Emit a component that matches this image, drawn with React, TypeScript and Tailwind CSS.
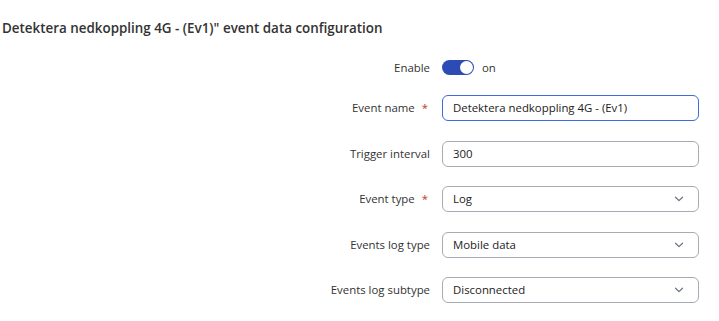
import React from "react";

const Chevron = () => (
  <svg width="10" height="6" viewBox="0 0 10 6" className="absolute right-[14px] top-1/2 -translate-y-1/2">
    <path d="M1.5 1.2 5 4.6 8.5 1.2" fill="none" stroke="#6b7280" strokeWidth="1.2" strokeLinecap="round" strokeLinejoin="round" />
  </svg>
);

const Row: React.FC<{ label: string; required?: boolean; children: React.ReactNode }> = ({ label, required, children }) => (
  <div className="flex items-center h-[26px]">
    <div className="w-[430px] text-right text-[11.4px] text-[#333]">
      {label}
      {required && <span className="text-[#c0392b] ml-[7px] mr-[2px]">*</span>}
    </div>
    <div className="ml-[12px] w-[257px]">{children}</div>
  </div>
);

const Field: React.FC<{ value: string; focused?: boolean; select?: boolean }> = ({ value, focused, select }) => (
  <div
    className={
      "relative h-[26px] rounded-[6px] flex items-center pl-[10px] text-[11.4px] text-[#222] bg-white " +
      (focused ? "border-[1.5px] border-[#3d6be0]" : "border border-[#a7abb3]")
    }
  >
    {value}
    {select && <Chevron />}
  </div>
);

export default function App() {
  return (
    <div className="w-[719px] h-[321px] bg-white font-['Open_Sans',sans-serif] overflow-hidden">
      <h1 className="pt-[18px] pl-[2px] text-[13.4px] leading-[20px] font-semibold text-[#333]">
        Detektera nedkoppling 4G - (Ev1)" event data configuration
      </h1>
      <div className="mt-[20px] flex flex-col gap-[19.5px]">
        <div className="flex items-center h-[20px] mb-[-2.5px]">
          <div className="w-[430px] text-right text-[11.4px] text-[#333]">Enable</div>
          <div className="ml-[12px] flex items-center gap-[8px]">
            <div className="relative w-[32px] h-[15px] rounded-full bg-[#2c4bb4]">
              <div className="absolute right-[1px] top-[1px] w-[13px] h-[13px] rounded-full bg-white"></div>
            </div>
            <span className="text-[11.4px] text-[#333]">on</span>
          </div>
        </div>
        <Row label="Event name" required>
          <Field value="Detektera nedkoppling 4G - (Ev1)" focused />
        </Row>
        <Row label="Trigger interval">
          <Field value="300" />
        </Row>
        <Row label="Event type" required>
          <Field value="Log" select />
        </Row>
        <Row label="Events log type">
          <Field value="Mobile data" select />
        </Row>
        <Row label="Events log subtype">
          <Field value="Disconnected" select />
        </Row>
      </div>
    </div>
  );
}
